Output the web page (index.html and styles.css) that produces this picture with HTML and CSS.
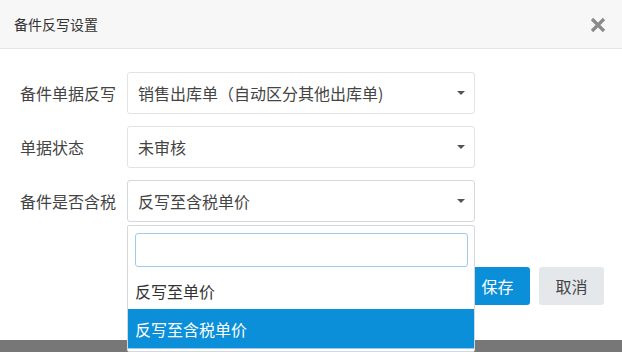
FILE: index.html
```html
<!DOCTYPE html>
<html lang="zh-CN">
<head>
    <meta charset="UTF-8">
    <meta name="viewport" content="width=device-width, initial-scale=1.0">
    <title>备件反写设置</title>
    <link rel="stylesheet" href="styles.css">
</head>
<body>
    <div class="modal">
        <div class="modal-header">
            <h4>备件反写设置</h4>
            <span class="close">
                <svg width="16" height="16" viewBox="0 0 16 16"><path d="M2 2 L14 14 M14 2 L2 14" stroke="#8a8a8a" stroke-width="3.2" stroke-linecap="butt"/></svg>
            </span>
        </div>

        <div class="modal-body">
            <div class="form-row">
                <label>备件单据反写</label>
                <div class="select">
                    <span>销售出库单（自动区分其他出库单)</span>
                    <b class="caret"></b>
                </div>
            </div>
            <div class="form-row">
                <label>单据状态</label>
                <div class="select">
                    <span>未审核</span>
                    <b class="caret"></b>
                </div>
            </div>
            <div class="form-row">
                <label>备件是否含税</label>
                <div class="select open">
                    <span>反写至含税单价</span>
                    <b class="caret"></b>
                </div>
            </div>
        </div>

        <div class="modal-footer">
            <button class="btn btn-primary">保存</button>
            <button class="btn btn-default">取消</button>
        </div>

        <!-- open dropdown of the third select -->
        <div class="dropdown">
            <div class="search"><input type="text"></div>
            <ul>
                <li>反写至单价</li>
                <li class="active">反写至含税单价</li>
            </ul>
        </div>
    </div>
</body>
</html>
```

FILE: styles.css
```css
* {
    box-sizing: border-box;
}
body {
    margin: 0;
    background: #777;
    font-family: "Noto Sans CJK SC", "Noto Sans", sans-serif;
    font-size: 16px;
    color: #444;
    height: 352px;
    overflow: hidden;
}
.modal {
    position: relative;
    width: 622px;
    height: 340px;
    background: white;
}
.modal-header {
    height: 49px;
    background: #f7f7f7;
    border-bottom: 1px solid #e5e5e5;
    display: flex;
    align-items: center;
    justify-content: space-between;
    padding: 0 16px 0 14px;
}
.modal-header h4 {
    margin: 0;
    font-size: 14px;
    font-weight: normal;
    color: #333;
}
.close {
    display: flex;
    margin-top: 2px;
}
.modal-body {
    padding: 23px 0 0 20px;
    display: flex;
    flex-direction: column;
    gap: 12px;
}
.form-row {
    display: flex;
    align-items: center;
}
.form-row label {
    width: 107px;
    color: #444;
}
.select {
    width: 348px;
    height: 42px;
    border: 1px solid #e3e3e3;
    border-radius: 3px;
    display: flex;
    align-items: center;
    justify-content: space-between;
    padding: 0 9px 0 10px;
    color: #444;
}
.select.open {
    border-color: #d4d8dc;
}
.caret {
    width: 0;
    height: 0;
    border-left: 4px solid transparent;
    border-right: 4px solid transparent;
    border-top: 4px solid #555;
}
.modal-footer {
    display: flex;
    justify-content: flex-end;
    gap: 9px;
    padding: 45px 18px 0 0;
}
.btn {
    width: 65px;
    height: 38px;
    border: none;
    border-radius: 3px;
    font-family: inherit;
    font-size: 16px;
}
.btn-primary {
    background: #0a8fd8;
    color: white;
}
.btn-default {
    background: #e4e8eb;
    color: #444;
}
.dropdown {
    position: absolute;
    left: 127px;
    top: 225px;
    width: 348px;
    height: 127px;
    background: white;
    border: 1px solid #d4d8dc;
    border-radius: 2px;
}
.search {
    padding: 7px 6px 0 7px;
}
.search input {
    width: 100%;
    height: 34px;
    border: 1px solid #9ecaed;
    border-radius: 3px;
    outline: none;
}
.dropdown ul {
    list-style: none;
    margin: 2px 0 0;
    padding: 0;
}
.dropdown li {
    height: 40px;
    line-height: 36px;
    padding: 4px 7px 0;
    color: #333;
}
.dropdown li.active {
    background: #0a8fd8;
    color: white;
    line-height: 40px;
    padding-top: 0;
    border-bottom: 1px solid #9ecaed;
}
```
